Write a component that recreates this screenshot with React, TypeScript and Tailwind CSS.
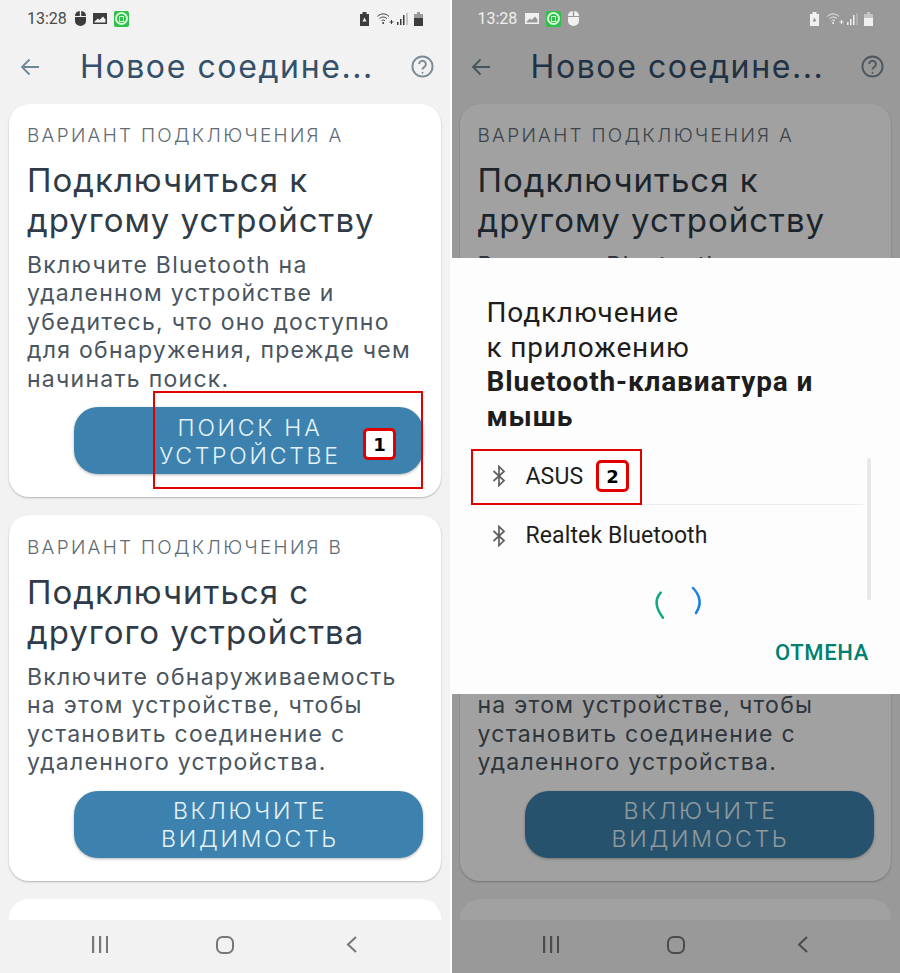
import { ReactNode } from "react";

const FONT = "font-['Inter','Noto_Sans',sans-serif]";

function MouseIcon({ light }: { light: boolean }) {
  return (
    <svg width="11" height="15" viewBox="0 0 11 15" className={light ? "text-[#f0f0f0]" : "text-[#3c3c3c]"}>
      <path d="M0 6h11v4a5.500 5 0 0 1-11 0zM0 5C0 2.300 1.800.4 4.800.1V5zM6.200.1C9.200.4 11 2.300 11 5H6.200z" fill="currentColor" />
    </svg>
  );
}

function ImageIcon({ light }: { light: boolean }) {
  return (
    <svg width="14" height="11" viewBox="0 0 14 11" className={light ? "text-[#f0f0f0]" : "text-[#3c3c3c]"}>
      <path fillRule="evenodd" d="M0 0h14v11H0zM1.500 8.500V9.500h11V6.500L10 3.500 6.500 7 5 5.500z" fill="currentColor" />
    </svg>
  );
}

function GreenIcon() {
  return (
    <span className="flex w-[15px] h-[16px] items-center justify-center rounded-[2px] bg-[#2fc04a]">
      <span className="flex w-[13px] h-[13px] items-center justify-center rounded-full border-2 border-[#dcf7dc]">
        <span className="w-[5px] h-[6px] border border-[#dcf7dc]" />
      </span>
    </span>
  );
}

function StatusBar({ dimmed }: { dimmed: boolean }) {
  const mark = dimmed ? "#f0f0f0" : "#3c3c3c";
  const faint = dimmed ? "#c4c4c4" : "#9a9a9a";
  const icons = dimmed
    ? [<ImageIcon key="i" light />, <GreenIcon key="g" />, <MouseIcon key="m" light />]
    : [<MouseIcon key="m" light={false} />, <ImageIcon key="i" light={false} />, <GreenIcon key="g" />];
  return (
    <div className={`relative z-20 flex h-[36px] items-center pl-[27px] pr-[27px] pt-[1px] ${dimmed ? "text-[#f0f0f0]" : "text-[#4a4a4a]"}`}>
      <span className="text-[16px] font-['Roboto',sans-serif] mr-[8px]">13:28</span>
      <div className="flex items-center gap-[7px]">{icons}</div>
      <div className="ml-auto flex items-center">
        <svg width="9" height="14" viewBox="0 0 9 14" className="mr-[8px]">
          <path fillRule="evenodd" d="M2.500 0h4v2H9v12H0V2h2.500zM4.500 5.500 2.500 9.500h4z" fill={mark} />
        </svg>
        <svg width="17" height="13" viewBox="0 0 17 13" fill="none" stroke={mark} strokeWidth="1" className="mr-[3px]">
          <path d="M.5 4.500c3.500-3.500 8-3.500 11.500 0M2.500 6.700c2.500-2.200 5-2.200 7.500 0M4.500 8.800c1.200-1 2.300-1 3.500 0" />
          <circle cx="6.200" cy="11" r="1" fill={mark} stroke="none" />
          <path d="M12.500 10h4M14.500 8v4" />
        </svg>
        <svg width="11" height="12" viewBox="0 0 11 12" className="mr-[6px]">
          <rect x="0" y="9" width="1.500" height="3" fill={mark} />
          <rect x="3" y="6" width="1.500" height="6" fill={mark} />
          <rect x="6" y="2" width="1.500" height="10" fill={mark} />
          <rect x="9.500" y="0" width="1" height="12" fill={faint} />
        </svg>
        <svg width="9" height="14" viewBox="0 0 9 14">
          <path d="M3 0h3v2h3v12H0V2h3z" fill={faint} />
          <rect x="0" y="6" width="9" height="8" fill={mark} />
        </svg>
      </div>
    </div>
  );
}

function Card({ label, title, body, button, pad }: { label: string; title: string[]; body: string[]; button: string[]; pad: string }) {
  return (
    <section className={`shrink-0 rounded-[20px] bg-white px-[18px] pb-[23px] shadow-[0_1px_2px_rgba(0,0,0,0.25)] whitespace-nowrap ${pad}`}>
      <p className="text-[19px] leading-[24px] font-light tracking-[0.12em] text-[#5f6b75]">{label}</p>
      <h2 className="mt-[12px] text-[33px] leading-[40px] text-[#2f3b47] tracking-[0.03em]">
        {title.map((t) => (
          <span key={t} className="block">{t}</span>
        ))}
      </h2>
      <p className="mt-[11px] text-[23px] leading-[28.4px] text-[#4a5560] tracking-[0.055em]">
        {body.map((t) => (
          <span key={t} className="block">{t}</span>
        ))}
      </p>
      <button className="ml-[47px] mt-[14px] flex h-[67px] w-[349px] flex-col items-center justify-center rounded-[24px] bg-[#3d82ae] pl-[3px] pt-[2px] text-[23px] leading-[28px] font-light tracking-[0.12em] text-[#e4f2f8] shadow-[0_1px_3px_rgba(0,0,0,0.3)]">
        {button.map((t) => (
          <span key={t}>{t}</span>
        ))}
      </button>
    </section>
  );
}

function RedBadge({ className, children }: { className: string; children: ReactNode }) {
  return (
    <span className={`absolute z-40 flex h-[32px] w-[33px] items-center justify-center rounded-[5px] border-[3px] border-[#e00000] bg-white text-[18px] font-bold text-black font-['DejaVu_Sans',sans-serif] ${className}`}>
      {children}
    </span>
  );
}

function BluetoothIcon() {
  return (
    <svg width="14" height="22" viewBox="0 0 14 22" fill="none" stroke="#5f5f5f" strokeWidth="1.700">
      <path d="M1.500 6 12 15.500 7 20.500V1.500l5 5L1.500 16" />
    </svg>
  );
}

function Dialog() {
  return (
    <div className="absolute left-0 right-0 top-[258px] z-30 h-[436px] bg-[#fdfdfd] pl-[36px] pt-[38px] font-['Roboto',sans-serif] whitespace-nowrap">
      <h3 className="text-[28px] leading-[34.500px] tracking-[0.03em] text-[#1d1d1d]">
        <span className="block">Подключение</span>
        <span className="block">к приложению</span>
        <span className="block font-bold">Bluetooth-клавиатура и</span>
        <span className="block font-bold">мышь</span>
      </h3>
      <div className="mt-[14px] w-[388px] -ml-[12px] text-[23px] text-[#1d1d1d] tracking-[0.005em]">
        <div className="flex h-[57px] items-center gap-[20px] border-b border-[#ececec] pl-[17px]">
          <BluetoothIcon />
          <span className="pt-[2px]">ASUS</span>
        </div>
        <div className="flex h-[62px] items-center gap-[20px] pl-[17px]">
          <BluetoothIcon />
          <span>Realtek Bluetooth</span>
        </div>
      </div>
      <div className="absolute left-[416px] top-[200px] h-[142px] w-[4px] rounded-full bg-[#e8e8e8]" />
      <svg className="absolute left-[204px] top-[328px] overflow-visible" width="48" height="34" viewBox="0 0 48 34" fill="none" strokeWidth="2.500" strokeLinecap="round">
        <path d="M5.700 6.700Q-3.500 17 8 31.700" stroke="#14a887" />
        <path d="M38 2Q49.500 14 41 27" stroke="#1a7fe0" />
      </svg>
      <span className="absolute right-[31px] top-[381px] text-[22px] leading-[28px] font-medium tracking-[0.03em] text-[#00806f]">ОТМЕНА</span>
    </div>
  );
}

function Phone({ dimmed }: { dimmed: boolean }) {
  return (
    <div className={`relative flex h-[973px] flex-1 flex-col overflow-hidden bg-[#f2f2f2] ${FONT}`}>
      <StatusBar dimmed={dimmed} />
      <header className="flex h-[68px] shrink-0 items-center pb-[7px] text-[#52707f]">
        <svg className="ml-[20px]" width="20" height="20" viewBox="0 0 20 20" fill="none" stroke="#6d8796" strokeWidth="1.800">
          <path d="M19 10H2M9.500 2.500 2 10l7.500 7.500" />
        </svg>
        <h1 className="ml-[40px] whitespace-nowrap text-[32px] leading-[40px] tracking-[0.05em] text-[#34506a]">Новое соедине...</h1>
        <svg className="ml-auto mr-[16px]" width="23" height="23" viewBox="0 0 24 24" fill="none" stroke="#7c8b95" strokeWidth="2">
          <circle cx="12" cy="12" r="10.500" />
          <path d="M8.500 9.500a3.500 3.500 0 1 1 5.500 2.900c-1.300.9-2 1.500-2 2.800" />
          <circle cx="12" cy="18.500" r="1" fill="#7c8b95" stroke="none" />
        </svg>
      </header>
      <main className="relative flex flex-1 flex-col gap-[18px] overflow-hidden px-[9px]">
        <Card
          pad="pt-[20px]"
          label="ВАРИАНТ ПОДКЛЮЧЕНИЯ А"
          title={["Подключиться к", "другому устройству"]}
          body={["Включите Bluetooth на", "удаленном устройстве и", "убедитесь, что оно доступно", "для обнаружения, прежде чем", "начинать поиск."]}
          button={["ПОИСК НА", "УСТРОЙСТВЕ"]}
        />
        <Card
          pad="pt-[21px]"
          label="ВАРИАНТ ПОДКЛЮЧЕНИЯ В"
          title={["Подключиться с", "другого устройства"]}
          body={["Включите обнаруживаемость", "на этом устройстве, чтобы", "установить соединение с", "удаленного устройства."]}
          button={["ВКЛЮЧИТЕ", "ВИДИМОСТЬ"]}
        />
        <section className="h-[40px] shrink-0 rounded-t-[20px] bg-white" />
      </main>
      <nav className="flex h-[53px] shrink-0 items-center justify-center bg-[#f2f2f2] pb-[4px]">
        <svg className="mr-[108px]" width="16" height="17" viewBox="0 0 16 17" fill="#777">
          <rect x="0" y="0" width="2.200" height="17" />
          <rect x="7" y="0" width="2.200" height="17" />
          <rect x="14" y="0" width="2.200" height="17" />
        </svg>
        <svg className="mr-[112px]" width="18" height="18" viewBox="0 0 18 18" fill="none" stroke="#777" strokeWidth="2">
          <rect x="1" y="1" width="16" height="16" rx="5.500" />
        </svg>
        <svg width="11" height="17" viewBox="0 0 11 17" fill="none" stroke="#777" strokeWidth="2">
          <path d="M10 1 2 8.500l8 7.500" />
        </svg>
      </nav>
      {dimmed && <div className="absolute inset-0 z-10 border-l border-white bg-black/[0.37]" />}
      {dimmed && <Dialog />}
    </div>
  );
}

export default function App() {
  return (
    <div className="relative flex h-[973px] w-[900px] gap-[1px] overflow-hidden bg-white">
      <Phone dimmed={false} />
      <Phone dimmed />
      <div className="absolute left-[153px] top-[391px] z-40 h-[98px] w-[270px] border-2 border-[#e00000]" />
      <RedBadge className="left-[363px] top-[428px]">1</RedBadge>
      <div className="absolute left-[471px] top-[449px] z-40 h-[56px] w-[171px] border-2 border-[#e00000]" />
      <RedBadge className="left-[596px] top-[460px]">2</RedBadge>
    </div>
  );
}
